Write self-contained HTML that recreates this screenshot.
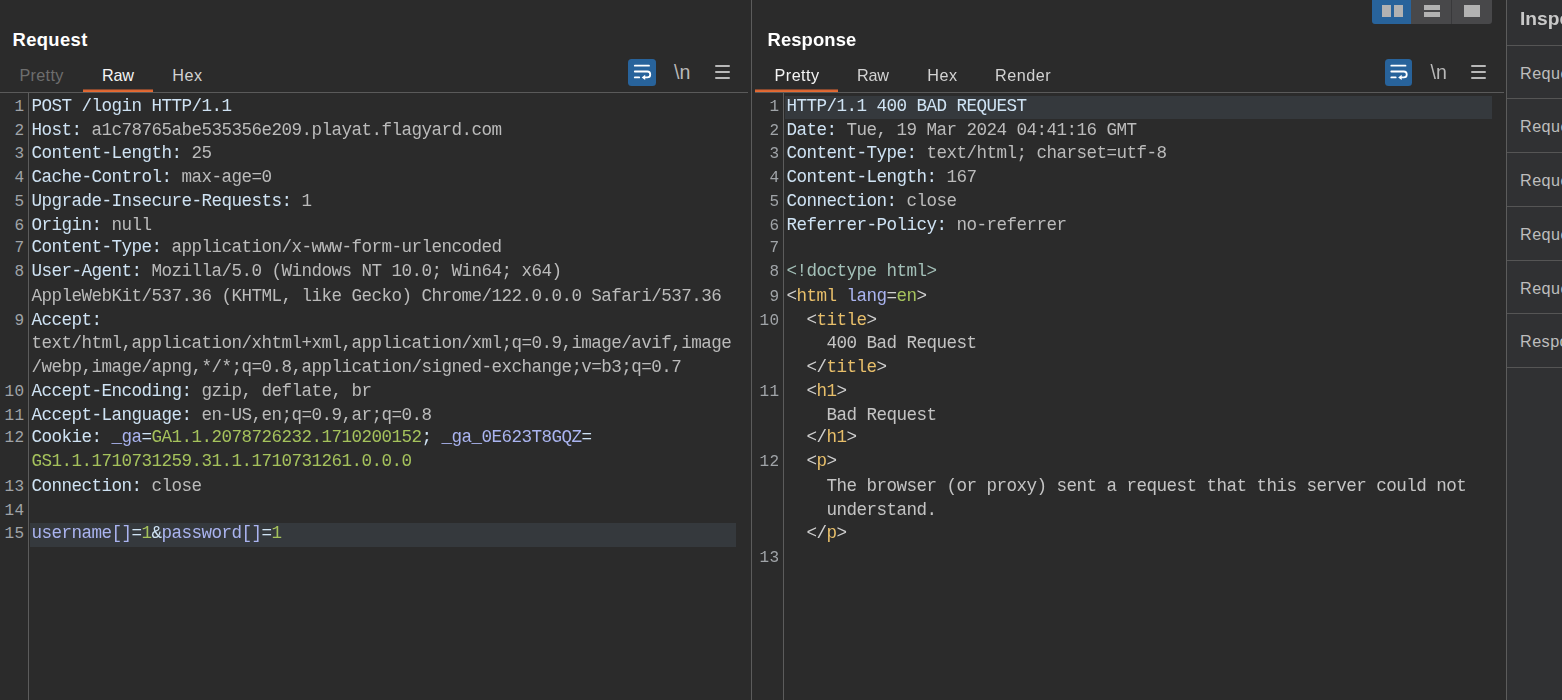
<!DOCTYPE html>
<html lang="en"><head><meta charset="utf-8"><title>Burp Suite - Repeater</title>
<style>
html,body{margin:0;padding:0;background:#2b2b2b;}
body{width:1562px;height:700px;position:relative;overflow:hidden;font-family:"Liberation Sans",sans-serif;color:#ddd;}
.abs{position:absolute}
.title{position:absolute;top:27.5px;font:bold 18.4px "Liberation Sans",sans-serif;color:#ffffff;line-height:24px;white-space:nowrap;letter-spacing:0.37px}
.tab{position:absolute;top:64px;font:16.2px "Liberation Sans",sans-serif;color:#d2d2d2;line-height:22px;white-space:nowrap}
.tab.dis{color:#6e6e6e}
.ul{position:absolute;top:89px;height:3px;background:linear-gradient(to bottom,#87492f 0,#87492f 1px,#d96533 1px,#d96533 2px,#e66b32 2px,#e66b32 3px)}
.hdiv{position:absolute;top:92px;height:1px;background:#5a5a5a}
.vline{position:absolute;width:1px;background:#5c5c5c}
.cl,.ln{position:absolute;font-family:"Liberation Mono",monospace;font-size:17.6px;letter-spacing:-0.562px;line-height:24px;height:24px;white-space:pre}
.cl{color:#cfe3f4}
.code{position:absolute;left:0;top:0;width:1506px;height:700px;will-change:transform;pointer-events:none}
.ln{width:30px;text-align:right;color:#a0a4a8;font-size:16px;letter-spacing:0.4px}
.hl{position:absolute;height:24px;background:#35393d}
.nl{position:absolute;font:19.6px "Liberation Sans",sans-serif;color:#b8b8b8;line-height:24px;white-space:nowrap}
.hb{position:absolute;width:15px;height:2px;background:#b8b8b8;border-radius:1px}
.lbtn{position:absolute;top:0;height:24px;background:#48484a}
.lbtn i{position:absolute;background:#b2b2b2;display:block}
#insp{position:absolute;left:1507px;top:0;width:55px;height:700px;background:#303133;overflow:hidden}
#insp .ih{position:absolute;left:13px;top:7px;font:bold 19.2px "Liberation Sans",sans-serif;color:#c9c9c9;line-height:24px;white-space:nowrap}
.irow{position:absolute;left:0;width:200px;border-top:1px solid #555;box-sizing:border-box;white-space:nowrap}
.irow span{position:absolute;left:13px;top:16px;font:16.2px "Liberation Sans",sans-serif;color:#bdbdbd;line-height:22px;letter-spacing:0.45px}
</style></head><body>

<!-- Request panel -->
<div class="title" style="left:12.5px">Request</div>
<div class="tab dis" style="left:19.5px;letter-spacing:0.3px">Pretty</div>
<div class="tab" style="left:102px;letter-spacing:-0.28px;color:#f4f4f4">Raw</div>
<div class="tab" style="left:172.3px;letter-spacing:0.45px">Hex</div>
<div class="ul" style="left:83px;width:70px"></div>
<div class="hdiv" style="left:0;width:748px"></div>
<div style="position:absolute;left:628px;top:59px;width:28px;height:27px"><svg class="wrapico" width="28" height="27" viewBox="0 0 28 27"><rect x="0" y="0" width="28" height="27" rx="3.5" ry="3.5" fill="#28639b"/><g transform="translate(0 0)"><g fill="none" stroke="#ffffff" stroke-width="1.8" stroke-linecap="round"><path d="M6.8 6.65H21"/><path d="M6.8 12.5H19.3a2.95 2.95 0 0 1 0 5.9H16.5"/><path d="M6.8 18.4H11.2"/></g><path d="M13.7 18.4L17.2 15.8V21Z" fill="#ffffff"/></g></svg></div>
<div class="nl" style="left:674px;top:60px">\n</div>
<div class="hb" style="left:715px;top:65px"></div>
<div class="hb" style="left:715px;top:71px"></div>
<div class="hb" style="left:715px;top:77px"></div>
<div class="vline" style="left:28px;top:93px;height:607px"></div>
<div class="hl" style="left:30px;top:523px;width:706px;height:24px"></div>
<div class="ln" style="left:-5.4px;top:95px">1</div>
<div class="ln" style="left:-5.4px;top:119px">2</div>
<div class="ln" style="left:-5.4px;top:142px">3</div>
<div class="ln" style="left:-5.4px;top:166px">4</div>
<div class="ln" style="left:-5.4px;top:190px">5</div>
<div class="ln" style="left:-5.4px;top:214px">6</div>
<div class="ln" style="left:-5.4px;top:236px">7</div>
<div class="ln" style="left:-5.4px;top:260px">8</div>
<div class="ln" style="left:-5.4px;top:309px">9</div>
<div class="ln" style="left:-5.4px;top:380px">10</div>
<div class="ln" style="left:-5.4px;top:404px">11</div>
<div class="ln" style="left:-5.4px;top:426px">12</div>
<div class="ln" style="left:-5.4px;top:475px">13</div>
<div class="ln" style="left:-5.4px;top:499px">14</div>
<div class="ln" style="left:-5.4px;top:522px">15</div>
<div class="code">
<div class="cl" style="left:31.6px;top:94px"><span style="color:#cfe3f4">POST /login HTTP/1.1</span></div>
<div class="cl" style="left:31.6px;top:118px"><span style="color:#cfe3f4">Host:</span><span style="color:#bbbbbb"> a1c78765abe535356e209.playat.flagyard.com</span></div>
<div class="cl" style="left:31.6px;top:141px"><span style="color:#cfe3f4">Content-Length:</span><span style="color:#bbbbbb"> 25</span></div>
<div class="cl" style="left:31.6px;top:165px"><span style="color:#cfe3f4">Cache-Control:</span><span style="color:#bbbbbb"> max-age=0</span></div>
<div class="cl" style="left:31.6px;top:189px"><span style="color:#cfe3f4">Upgrade-Insecure-Requests:</span><span style="color:#bbbbbb"> 1</span></div>
<div class="cl" style="left:31.6px;top:213px"><span style="color:#cfe3f4">Origin:</span><span style="color:#bbbbbb"> null</span></div>
<div class="cl" style="left:31.6px;top:235px"><span style="color:#cfe3f4">Content-Type:</span><span style="color:#bbbbbb"> application/x-www-form-urlencoded</span></div>
<div class="cl" style="left:31.6px;top:259px"><span style="color:#cfe3f4">User-Agent:</span><span style="color:#bbbbbb"> Mozilla/5.0 (Windows NT 10.0; Win64; x64)</span></div>
<div class="cl" style="left:31.6px;top:284px"><span style="color:#bbbbbb">AppleWebKit/537.36 (KHTML, like Gecko) Chrome/122.0.0.0 Safari/537.36</span></div>
<div class="cl" style="left:31.6px;top:308px"><span style="color:#cfe3f4">Accept:</span></div>
<div class="cl" style="left:31.6px;top:331px"><span style="color:#bbbbbb">text/html,application/xhtml+xml,application/xml;q=0.9,image/avif,image</span></div>
<div class="cl" style="left:31.6px;top:355px"><span style="color:#bbbbbb">/webp,image/apng,*/*;q=0.8,application/signed-exchange;v=b3;q=0.7</span></div>
<div class="cl" style="left:31.6px;top:379px"><span style="color:#cfe3f4">Accept-Encoding:</span><span style="color:#bbbbbb"> gzip, deflate, br</span></div>
<div class="cl" style="left:31.6px;top:403px"><span style="color:#cfe3f4">Accept-Language:</span><span style="color:#bbbbbb"> en-US,en;q=0.9,ar;q=0.8</span></div>
<div class="cl" style="left:31.6px;top:425px"><span style="color:#cfe3f4">Cookie: </span><span style="color:#aab4f0">_ga</span><span style="color:#cfe3f4">=</span><span style="color:#a5c25c">GA1.1.2078726232.1710200152</span><span style="color:#cfe3f4">; </span><span style="color:#aab4f0">_ga_0E623T8GQZ</span><span style="color:#cfe3f4">=</span></div>
<div class="cl" style="left:31.6px;top:449px"><span style="color:#a5c25c">GS1.1.1710731259.31.1.1710731261.0.0.0</span></div>
<div class="cl" style="left:31.6px;top:474px"><span style="color:#cfe3f4">Connection:</span><span style="color:#bbbbbb"> close</span></div>
<div class="cl" style="left:31.6px;top:521px"><span style="color:#aab4f0">username[]</span><span style="color:#cfe3f4">=</span><span style="color:#a5c25c">1</span><span style="color:#cfe3f4">&amp;</span><span style="color:#aab4f0">password[]</span><span style="color:#cfe3f4">=</span><span style="color:#a5c25c">1</span></div>
</div>

<!-- splitter -->
<div class="vline" style="left:751px;top:0;height:700px"></div>

<!-- Response panel -->
<div class="title" style="left:767.5px;letter-spacing:0.12px">Response</div>
<div class="tab" style="left:774.5px;letter-spacing:0.47px;color:#f4f4f4">Pretty</div>
<div class="tab" style="left:857px;letter-spacing:-0.28px">Raw</div>
<div class="tab" style="left:927.3px;letter-spacing:0.45px">Hex</div>
<div class="tab" style="left:995px;letter-spacing:0.5px">Render</div>
<div class="ul" style="left:755px;width:83px"></div>
<div class="hdiv" style="left:755px;width:749px"></div>
<div style="position:absolute;left:1385px;top:59px;width:28px;height:27px"><svg class="wrapico" width="28" height="27" viewBox="0 0 28 27"><rect x="0" y="0" width="27" height="27" rx="3.5" ry="3.5" fill="#28639b"/><g transform="translate(-0.5 0)"><g fill="none" stroke="#ffffff" stroke-width="1.8" stroke-linecap="round"><path d="M6.8 6.65H21"/><path d="M6.8 12.5H19.3a2.95 2.95 0 0 1 0 5.9H16.5"/><path d="M6.8 18.4H11.2"/></g><path d="M13.7 18.4L17.2 15.8V21Z" fill="#ffffff"/></g></svg></div>
<div class="nl" style="left:1430.5px;top:60px">\n</div>
<div class="hb" style="left:1471px;top:65px"></div>
<div class="hb" style="left:1471px;top:71px"></div>
<div class="hb" style="left:1471px;top:77px"></div>
<div class="vline" style="left:783px;top:93px;height:607px"></div>
<div class="hl" style="left:785px;top:96px;width:707px;height:23px"></div>
<div class="ln" style="left:749.6px;top:95px">1</div>
<div class="ln" style="left:749.6px;top:119px">2</div>
<div class="ln" style="left:749.6px;top:142px">3</div>
<div class="ln" style="left:749.6px;top:166px">4</div>
<div class="ln" style="left:749.6px;top:190px">5</div>
<div class="ln" style="left:749.6px;top:214px">6</div>
<div class="ln" style="left:749.6px;top:236px">7</div>
<div class="ln" style="left:749.6px;top:260px">8</div>
<div class="ln" style="left:749.6px;top:285px">9</div>
<div class="ln" style="left:749.6px;top:309px">10</div>
<div class="ln" style="left:749.6px;top:380px">11</div>
<div class="ln" style="left:749.6px;top:450px">12</div>
<div class="ln" style="left:749.6px;top:546px">13</div>
<div class="code">
<div class="cl" style="left:786.6px;top:94px"><span style="color:#cfe3f4">HTTP/1.1 400 BAD REQUEST</span></div>
<div class="cl" style="left:786.6px;top:118px"><span style="color:#cfe3f4">Date:</span><span style="color:#bbbbbb"> Tue, 19 Mar 2024 04:41:16 GMT</span></div>
<div class="cl" style="left:786.6px;top:141px"><span style="color:#cfe3f4">Content-Type:</span><span style="color:#bbbbbb"> text/html; charset=utf-8</span></div>
<div class="cl" style="left:786.6px;top:165px"><span style="color:#cfe3f4">Content-Length:</span><span style="color:#bbbbbb"> 167</span></div>
<div class="cl" style="left:786.6px;top:189px"><span style="color:#cfe3f4">Connection:</span><span style="color:#bbbbbb"> close</span></div>
<div class="cl" style="left:786.6px;top:213px"><span style="color:#cfe3f4">Referrer-Policy:</span><span style="color:#bbbbbb"> no-referrer</span></div>
<div class="cl" style="left:786.6px;top:259px"><span style="color:#a3c0b8">&lt;!doctype html&gt;</span></div>
<div class="cl" style="left:786.6px;top:284px"><span style="color:#d0d0d0">&lt;</span><span style="color:#e8bf6a">html</span> <span style="color:#aab4f0">lang</span><span style="color:#d0d0d0">=</span><span style="color:#a5c25c">en</span><span style="color:#d0d0d0">&gt;</span></div>
<div class="cl" style="left:786.6px;top:308px">  <span style="color:#d0d0d0">&lt;</span><span style="color:#e8bf6a">title</span><span style="color:#d0d0d0">&gt;</span></div>
<div class="cl" style="left:786.6px;top:331px"><span style="color:#c4c4c4">    400 Bad Request</span></div>
<div class="cl" style="left:786.6px;top:355px">  <span style="color:#d0d0d0">&lt;/</span><span style="color:#e8bf6a">title</span><span style="color:#d0d0d0">&gt;</span></div>
<div class="cl" style="left:786.6px;top:379px">  <span style="color:#d0d0d0">&lt;</span><span style="color:#e8bf6a">h1</span><span style="color:#d0d0d0">&gt;</span></div>
<div class="cl" style="left:786.6px;top:403px"><span style="color:#c4c4c4">    Bad Request</span></div>
<div class="cl" style="left:786.6px;top:425px">  <span style="color:#d0d0d0">&lt;/</span><span style="color:#e8bf6a">h1</span><span style="color:#d0d0d0">&gt;</span></div>
<div class="cl" style="left:786.6px;top:449px">  <span style="color:#d0d0d0">&lt;</span><span style="color:#e8bf6a">p</span><span style="color:#d0d0d0">&gt;</span></div>
<div class="cl" style="left:786.6px;top:474px"><span style="color:#c4c4c4">    The browser (or proxy) sent a request that this server could not</span></div>
<div class="cl" style="left:786.6px;top:498px"><span style="color:#c4c4c4">    understand.</span></div>
<div class="cl" style="left:786.6px;top:521px">  <span style="color:#d0d0d0">&lt;/</span><span style="color:#e8bf6a">p</span><span style="color:#d0d0d0">&gt;</span></div>
</div>

<!-- layout buttons -->
<div class="lbtn" style="left:1372px;width:39px;background:#28639b;border-radius:0 0 0 3px"><i style="left:10px;top:5px;width:9px;height:12px"></i><i style="left:22px;top:5px;width:9px;height:12px"></i></div>
<div class="lbtn" style="left:1411px;width:40px"><i style="left:13px;top:5px;width:16px;height:5px"></i><i style="left:13px;top:12px;width:16px;height:5px"></i></div>
<div class="lbtn" style="left:1451px;width:1px;background:#39393b"></div>
<div class="lbtn" style="left:1452px;width:40px;border-radius:0 0 3px 0"><i style="left:12px;top:5px;width:16px;height:12px"></i></div>

<!-- Inspector -->
<div class="vline" style="left:1506px;top:0;height:700px"></div>
<div id="insp">
<div class="ih">Inspector</div>
<div class="irow" style="top:45px;height:53px"><span>Request attributes</span></div>
<div class="irow" style="top:98px;height:54px"><span>Request query parameters</span></div>
<div class="irow" style="top:152px;height:54px"><span>Request body parameters</span></div>
<div class="irow" style="top:206px;height:54px"><span>Request cookies</span></div>
<div class="irow" style="top:260px;height:53px"><span>Request headers</span></div>
<div class="irow" style="top:313px;height:54px"><span>Response headers</span></div>
<div class="irow" style="top:367px;height:1px"></div>
</div>
</body></html>
